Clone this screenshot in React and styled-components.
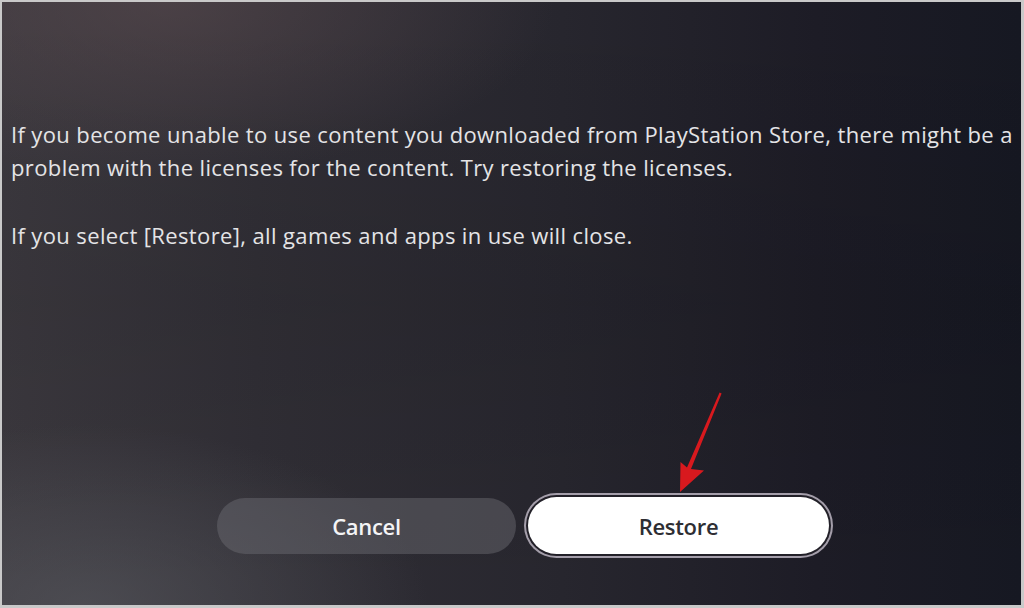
import React from 'react';
import styled, { createGlobalStyle } from 'styled-components';

const GlobalStyle = createGlobalStyle`
  html, body {
    margin: 0;
    padding: 0;
    background: #c9c9c9;
  }
  * {
    box-sizing: border-box;
  }
`;

const Frame = styled.div`
  width: 1024px;
  height: 608px;
  padding: 2px 3px 3px 2px;
  background: #c9c9c9;
`;

const Screen = styled.div`
  position: relative;
  height: 100%;
  display: flex;
  flex-direction: column;
  padding: 116px 0 51px 9px;
  overflow: hidden;
  background:
    radial-gradient(ellipse 460px 240px at 8% 100%, rgba(88, 89, 95, 0.6), transparent 75%),
    radial-gradient(ellipse 520px 230px at 16% 0%, rgba(92, 76, 80, 0.55), transparent 75%),
    linear-gradient(180deg, rgba(0, 0, 0, 0) 0%, rgba(0, 0, 0, 0.08) 50%, rgba(0, 0, 0, 0) 100%),
    linear-gradient(90deg, #3c393f 0%, #312f36 25%, #27262e 55%, #1d1c26 80%, #161822 100%);
  font-family: 'Open Sans', 'Noto Sans', sans-serif;
`;

const Message = styled.p`
  margin: 0 0 ${({ gap }) => gap}px;
  color: #e4e4e6;
  font-size: 22px;
  line-height: 33px;
  font-weight: 400;
  letter-spacing: 0.37px;
  white-space: nowrap;
`;

const Actions = styled.div`
  margin-top: auto;
  display: flex;
  align-items: center;
  gap: 12px;
  padding-left: 206px;
`;

const Button = styled.button`
  width: ${({ primary }) => (primary ? 301 : 299)}px;
  height: ${({ primary }) => (primary ? 57 : 56)}px;
  border: none;
  border-radius: 29px;
  font-family: 'Open Sans', 'Noto Sans', sans-serif;
  font-size: 22px;
  font-weight: 600;
  letter-spacing: -0.3px;
  color: ${({ primary }) => (primary ? '#2e2e33' : '#f4f4f6')};
  background: ${({ primary }) => (primary ? '#ffffff' : 'rgba(110, 110, 118, 0.45)')};
  box-shadow: ${({ primary }) =>
    primary ? '0 0 0 2px #222028, 0 0 0 4px #a49eaa' : 'none'};
`;

const Arrow = styled.svg`
  position: absolute;
  left: 0;
  top: 0;
  width: 1019px;
  height: 603px;
  pointer-events: none;
`;

export default function App() {
  return (
    <>
      <GlobalStyle />
      <Frame>
        <Screen>
          <Message gap={35}>
            If you become unable to use content you downloaded from PlayStation Store, there might be a
            <br />
            problem with the licenses for the content. Try restoring the licenses.
          </Message>
          <Message gap={0}>If you select [Restore], all games and apps in use will close.</Message>
          <Actions>
            <Button>Cancel</Button>
            <Button primary>Restore</Button>
          </Actions>
          <Arrow viewBox="0 0 1019 603">
            <path
              d="M717.6 390.6 L719.6 391.4 L689 467 L702 468.5 L678 490 L678.5 460 L685 465.5 Z"
              fill="#d8191e"
            />
          </Arrow>
        </Screen>
      </Frame>
    </>
  );
}
